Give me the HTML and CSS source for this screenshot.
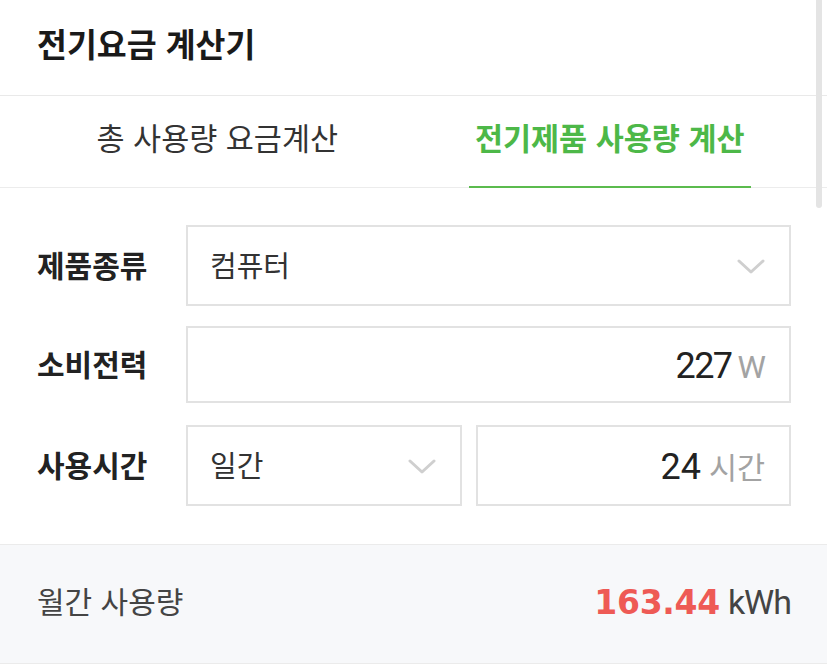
FILE: index.html
```html
<!DOCTYPE html>
<html lang="ko">
<head>
<meta charset="utf-8">
<title>전기요금 계산기</title>
<link rel="stylesheet" href="styles.css">
</head>
<body>
<div class="page">
  <header class="header">
    <h1 class="title">전기요금 계산기</h1>
  </header>
  <nav class="tabs">
    <div class="tab"><span class="tab-label">총 사용량 요금계산</span></div>
    <div class="tab tab-active"><span class="tab-label">전기제품 사용량 계산</span></div>
  </nav>
  <section class="form">
    <div class="row">
      <div class="label">제품종류</div>
      <div class="field field-select">
        <span class="field-text">컴퓨터</span>
        <svg class="chevron" width="28" height="16" viewBox="0 0 28 16"><path d="M2 2 L14 13 L26 2" fill="none" stroke="#cfcfcf" stroke-width="3" stroke-linecap="round" stroke-linejoin="round"/></svg>
      </div>
    </div>
    <div class="row row-mid">
      <div class="label">소비전력</div>
      <div class="field field-input">
        <span class="num num-tight">227</span><span class="unit unit-w">W</span>
      </div>
    </div>
    <div class="row">
      <div class="label">사용시간</div>
      <div class="split">
        <div class="field field-select field-period">
          <span class="field-text">일간</span>
          <svg class="chevron" width="28" height="16" viewBox="0 0 28 16"><path d="M2 2 L14 13 L26 2" fill="none" stroke="#cfcfcf" stroke-width="3" stroke-linecap="round" stroke-linejoin="round"/></svg>
        </div>
        <div class="field field-input field-hours">
          <span class="num">24</span><span class="unit">시간</span>
        </div>
      </div>
    </div>
  </section>
  <section class="result">
    <span class="result-label">월간 사용량</span>
    <span class="result-value"><span class="result-num">163.44</span><span class="result-unit">kWh</span></span>
  </section>
  <div class="scrollbar"></div>
</div>
</body>
</html>
```

FILE: styles.css
```css
html, body {
  margin: 0;
  padding: 0;
  background: #ffffff;
}

body {
  font-family: "Noto Sans CJK KR", "Noto Sans", sans-serif;
  color: #222222;
}

.page {
  position: relative;
  width: 827px;
  height: 667px;
  overflow: hidden;
}

.header {
  height: 96px;
  border-bottom: 1px solid #e9e9e9;
  display: flex;
  align-items: center;
  padding: 0 37px 10px;
  box-sizing: border-box;
}

.title {
  margin: 0;
  font-size: 32.5px;
  font-weight: 700;
  color: #1a1a1a;
}

.tabs {
  display: flex;
  height: 92px;
  padding: 0 21px;
  border-bottom: 1px solid #ececec;
  box-sizing: border-box;
}

.tab {
  flex: 1;
  display: flex;
  justify-content: center;
  align-items: stretch;
}

.tab-label {
  display: flex;
  align-items: center;
  padding: 0 6px 8px;
  font-size: 30.5px;
  color: #333333;
  margin-bottom: -1px;
  border-bottom: 2px solid transparent;
}

.tab-active .tab-label {
  color: #4db848;
  font-weight: 700;
  border-bottom-color: #5bbb4e;
}

.form {
  padding: 37px 36px 38px 37px;
  display: flex;
  flex-direction: column;
  gap: 20px;
}

.row {
  display: flex;
  align-items: center;
  height: 81px;
}

.row-mid {
  height: 77px;
  margin-bottom: 2px;
}

.label {
  width: 149px;
  font-size: 30px;
  font-weight: 700;
  color: #222222;
  padding-bottom: 4px;
}

.field {
  flex: 1;
  height: 100%;
  box-sizing: border-box;
  border: 2px solid #e2e2e2;
  display: flex;
  align-items: center;
  padding: 0 24px 0 22px;
  background: #ffffff;
}

.field-select {
  justify-content: space-between;
}

.field-input {
  justify-content: flex-end;
  align-items: baseline;
  padding-top: 17px;
}

.field-text {
  font-size: 29px;
  color: #333333;
  padding-bottom: 4px;
}

.chevron {
  display: block;
  margin-top: 2px;
}

.num {
  font-family: "Roboto", sans-serif;
  font-size: 36px;
  color: #222222;
}

.num-tight {
  letter-spacing: -1.5px;
}

.unit {
  margin-left: 8px;
  font-size: 30.5px;
  color: #a3a3a3;
}

.unit-w {
  font-family: "Roboto", sans-serif;
  font-size: 32px;
  margin-left: 6px;
  letter-spacing: -1px;
}

.split {
  flex: 1;
  height: 100%;
  display: flex;
  gap: 14px;
}

.field-period {
  flex: 0 0 276px;
  padding-right: 24px;
}

.field-hours {
  flex: 1;
}

.result {
  height: 120px;
  box-sizing: border-box;
  border-top: 1px solid #ebebeb;
  border-bottom: 1px solid #ebebeb;
  background: #f7f8fa;
  display: flex;
  align-items: center;
  justify-content: space-between;
  padding: 0 36px 4px 37px;
}

.result-label {
  font-size: 30px;
  color: #444444;
  padding-bottom: 4px;
}

.result-value {
  display: flex;
  align-items: baseline;
}

.result-num {
  font-family: "DejaVu Sans", sans-serif;
  font-weight: 700;
  font-size: 33px;
  color: #ee5a55;
  letter-spacing: -0.3px;
}

.result-unit {
  font-family: "Roboto", sans-serif;
  font-size: 34px;
  color: #444444;
  margin-left: 8px;
  letter-spacing: -1px;
}

.scrollbar {
  position: absolute;
  top: 0;
  right: 5px;
  width: 6px;
  height: 208px;
  border-radius: 0 0 3px 3px;
  background: #e4e4e4;
}
```
